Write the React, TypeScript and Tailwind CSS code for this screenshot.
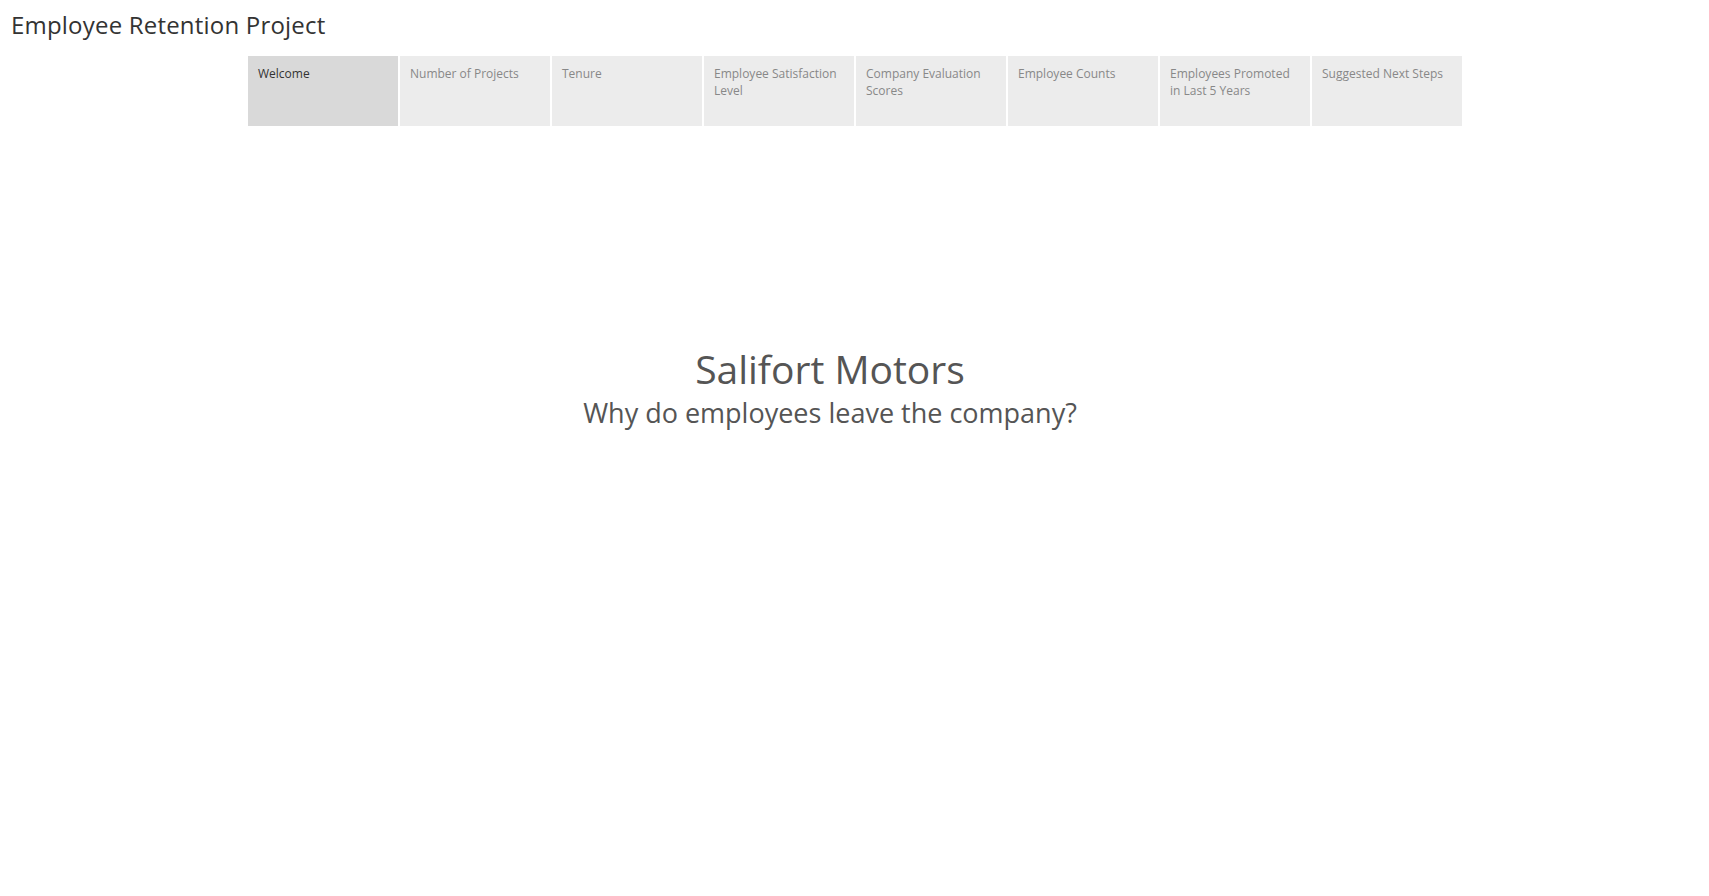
const tabs = [
  "Welcome",
  "Number of Projects",
  "Tenure",
  "Employee Satisfaction Level",
  "Company Evaluation Scores",
  "Employee Counts",
  "Employees Promoted in Last 5 Years",
  "Suggested Next Steps",
];

export default function App() {
  const active = 0;
  return (
    <div
      className="w-[1709px] h-[896px] bg-white overflow-hidden"
      style={{ fontFamily: "'Open Sans', Lato, sans-serif" }}
    >
      <div className="pl-[11px] pt-[9px] h-[56px]">
        <h1 className="text-[24px] leading-[32px] text-[#333333] font-normal tracking-[0.2px]">
          Employee Retention Project
        </h1>
      </div>

      <div className="flex gap-[2px] pl-[248px]">
        {tabs.map((t, i) => (
          <div
            key={t}
            className={
              i === active
                ? "w-[150px] h-[70px] bg-[#d9d9d9] pl-[10px] pr-[10px] pt-[9px] text-[12px] leading-[17px] text-[#333333]"
                : "w-[150px] h-[70px] bg-[#ececec] pl-[10px] pr-[10px] pt-[9px] text-[12px] leading-[17px] text-[#888888]"
            }
          >
            {t}
          </div>
        ))}
      </div>

      <div className="w-[1660px] flex flex-col items-center pt-[220px]">
        <div className="text-[39px] leading-[46px] text-[#555555]">Salifort Motors</div>
        <div className="text-[27px] leading-[42px] text-[#555555]">
          Why do employees leave the company?
        </div>
      </div>
    </div>
  );
}
